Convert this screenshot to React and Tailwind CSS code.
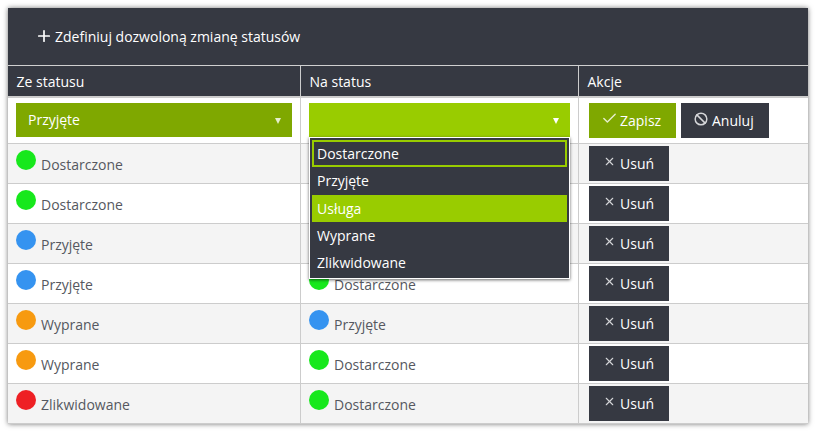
import React from "react";
import { Plus, Check, Ban, X } from "lucide-react";

const C = { g: "bg-[#17e81c]", b: "bg-[#3593f0]", o: "bg-[#f79a10]", r: "bg-[#ee2024]" };
const rows = [
  ["g", "Dostarczone", null, null],
  ["g", "Dostarczone", null, null],
  ["b", "Przyjęte", null, null],
  ["b", "Przyjęte", "g", "Dostarczone"],
  ["o", "Wyprane", "b", "Przyjęte"],
  ["o", "Wyprane", "g", "Dostarczone"],
  ["r", "Zlikwidowane", "g", "Dostarczone"],
];
const gridCols = "grid grid-cols-[293px_278px_1fr]";

function Status({ c, t }) {
  if (!t) return null;
  return (
    <div className="flex items-start px-2 pt-[6px] h-full">
      <span className={`w-5 h-5 rounded-full shrink-0 ${C[c]}`} />
      <span className="ml-[5px] mt-[5px] text-[14px] leading-[20px] text-[#555860]">{t}</span>
    </div>
  );
}

function Caret() {
  return <span className="mt-[2px] w-0 h-0 border-x-[3px] border-x-transparent border-t-[6px] border-t-white" />;
}

export default function App() {
  return (
    <div className="w-[816px] h-[431px] bg-white p-2 font-['Open_Sans',sans-serif]">
      <div className="relative w-[800px] h-[416px] bg-white shadow-[0_0_5px_rgba(0,0,0,0.55)]">
        <div className="h-[57px] bg-[#363942] flex items-center pl-[27px] text-white text-[14px]">
          <Plus size={18} strokeWidth={2.25} className="mr-[2px] -mt-[2px]" />
          <span>Zdefiniuj dozwoloną zmianę statusów</span>
        </div>
        <div className={`${gridCols} h-[33px] bg-[#363942] text-white text-[14px] leading-[20px] border-t border-t-[#d0d0d0] border-b-2 border-b-[#cccccc]`}>
          <div className="pl-[8.5px] pt-[6px] border-r border-r-[#cccccc]">Ze statusu</div>
          <div className="pl-[8.5px] pt-[6px] border-r border-r-[#cccccc]">Na status</div>
          <div className="pl-[8.5px] pt-[6px]">Akcje</div>
        </div>
        <div className={`${gridCols} h-[46px] bg-white border-b border-b-[#cccccc]`}>
          <div className="px-2 pt-[5px] border-r border-r-[#cccccc]">
            <div className="h-[34px] bg-[#7fa800] text-white text-[14px] flex items-center justify-between pl-3 pr-[11px]">
              <span className="-mt-[1px]">Przyjęte</span>
              <span className="opacity-80 flex"><Caret /></span>
            </div>
          </div>
          <div className="px-2 pt-[5px] border-r border-r-[#cccccc]">
            <div className="w-[261px] h-[34px] bg-[#99cc00] flex items-center justify-end pr-[11px]">
              <Caret />
            </div>
          </div>
          <div className="px-[10px] pt-[5px] flex gap-[5px] items-start">
            <button className="w-[87px] h-[35px] bg-[#7fa800] text-white text-[14px] flex items-center pl-[12px] gap-[2px]">
              <Check size={17} strokeWidth={2} className="text-[#e6eecc] -mt-[5px]" />
              Zapisz
            </button>
            <button className="w-[88px] h-[35px] bg-[#363942] text-white text-[14px] flex items-center pl-[13px] gap-[4px]">
              <Ban size={14} strokeWidth={2.5} className="text-[#d5d6d9] -mt-[4px]" />
              Anuluj
            </button>
          </div>
        </div>
        {rows.map((r, i) => (
          <div key={i} className={`${gridCols} h-[40px] border-b border-b-[#cccccc] ${i % 2 === 0 ? "bg-[#f4f4f4]" : "bg-white"}`}>
            <div className="border-r border-r-[#cccccc]"><Status c={r[0]} t={r[1]} /></div>
            <div className="border-r border-r-[#cccccc]"><Status c={r[2]} t={r[3]} /></div>
            <div className="px-[10px] pt-[2px]">
              <button className="w-[80px] h-[35px] bg-[#363942] text-white text-[14px] flex items-center pl-[14px] gap-[4px]">
                <X size={13} strokeWidth={2} className="text-[#d5d6d9] -mt-[4px]" />
                Usuń
              </button>
            </div>
          </div>
        ))}
        <div className="absolute left-[301px] top-[129px] w-[261px] h-[142px] bg-[#363942] border border-white shadow-[0_1px_3px_rgba(0,0,0,0.6)] p-[2px] text-white text-[14px]">
          <div className="h-[27px] border-2 border-[#99cc00] flex items-center pl-[3px]">Dostarczone</div>
          <div className="h-[28px] flex items-center pl-[5px] pb-[1px]">Przyjęte</div>
          <div className="h-[27px] bg-[#99cc00] flex items-center pl-[5px]">Usługa</div>
          <div className="h-[27px] flex items-center pl-[5px]">Wyprane</div>
          <div className="h-[27px] flex items-center pl-[5px]">Zlikwidowane</div>
        </div>
      </div>
    </div>
  );
}
